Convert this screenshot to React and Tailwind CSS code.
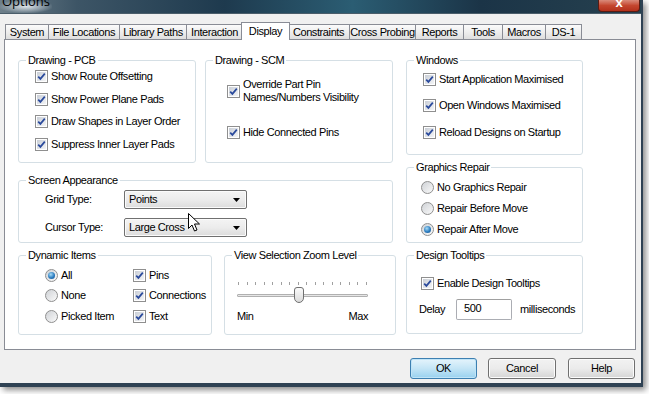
import React from 'react';

const tabs = [
    ['System', 'w-[44px]'],
    ['File Locations', 'w-[71px]'],
    ['Library Paths', 'w-[67px]'],
    ['Interaction', 'w-[56px]'],
    ['Display', 'w-[49px]'],
    ['Constraints', 'w-[62px]'],
    ['Cross Probing', 'w-[66px]'],
    ['Reports', 'w-[48px]'],
    ['Tools', 'w-[39px]'],
    ['Macros', 'w-[43px]'],
    ['DS-1', 'w-[36px]'],
];

const Check = () => (
    <span className="w-[13px] h-[13px] shrink-0 border border-[#8f8f8f] bg-white p-[1px] flex">
        <span className="flex-1 flex items-center justify-center bg-gradient-to-br from-[#c9ced6] to-[#f4f5f7]">
            <svg width="9" height="9" viewBox="0 0 9 9">
                <path d="M1.2 4.6 L3.4 6.9 L7.8 1.6" stroke="#2a4a9c" strokeWidth="1.7" fill="none" />
            </svg>
        </span>
    </span>
);

const Radio = ({ on }) => (
    <span className="w-[13px] h-[13px] shrink-0 rounded-full border border-[#8f8f8f] bg-gradient-to-br from-[#cfd2d6] to-[#fafafa] flex items-center justify-center">
        {on && <span className="w-[7px] h-[7px] rounded-full bg-[radial-gradient(circle_at_40%_35%,#a8dcf7,#2c7dc0_55%,#134f8c)]" />}
    </span>
);

const CheckRow = ({ children }) => (
    <div className="flex items-center gap-[3px] h-[13px] whitespace-nowrap"><Check />{children}</div>
);

const RadioRow = ({ on, children }) => (
    <div className="flex items-center gap-[3px] h-[13px] whitespace-nowrap"><Radio on={on} />{children}</div>
);

const Group = ({ title, className, children }) => (
    <div className={`relative shrink-0 border border-[#d5dfe5] rounded-[3px] ${className}`}>
        <span className="absolute -top-[7px] left-[7px] bg-white px-[2px] leading-[13px] whitespace-nowrap">{title}</span>
        {children}
    </div>
);

const Combo = ({ value }) => (
    <div className="w-[123px] h-[19px] border border-[#707070] rounded-[2px] bg-gradient-to-b from-[#f4f4f4] via-[#ececec] to-[#dcdcdc] flex items-center pl-[4px] pr-[6px] shadow-[inset_0_0_0_1px_#fbfbfb]">
        <span className="flex-1">{value}</span>
        <svg width="7" height="4" viewBox="0 0 7 4"><path d="M0 0 H7 L3.5 4 Z" fill="#000" /></svg>
    </div>
);

const Button = ({ label, def, className }) => (
    <div className={`h-[21px] rounded-[3px] border flex items-center justify-center ${def ? 'border-[#3c7fb1] bg-gradient-to-b from-[#e5f4fc] via-[#c4e5f6] to-[#98d1ef] shadow-[inset_0_0_0_1px_#c0e4f7]' : 'border-[#707070] bg-gradient-to-b from-[#f2f2f2] via-[#ebebeb] to-[#d5d5d5] shadow-[inset_0_0_0_1px_#fcfcfc]'} ${className}`}>
        {label}
    </div>
);

export default function App() {
    return (
        <div className="w-[649px] h-[394px] bg-white overflow-hidden text-[11px] leading-[13px] tracking-[-0.4px] text-black font-['Liberation_Sans',Arial,sans-serif]">
            <div className="w-[643px] h-[387px] flex flex-col border-r-[2px] border-b-[4px] border-[#2f4254] shadow-[3px_3px_6px_rgba(0,0,0,0.45)]">
                {/* title bar */}
                <div className="h-[14px] shrink-0 flex bg-[linear-gradient(90deg,#6d7f8a_0%,#3d5566_12%,#1e3a4e_35%,#2b5d73_55%,#1b3447_75%,#26414f_100%)] border-b border-[#4a5d6a]">
                    <div className="h-full px-[2px] bg-[radial-gradient(ellipse_at_center,rgba(235,240,245,0.9),rgba(235,240,245,0)_75%)]">
                        <span className="block -mt-[7px] text-[13px] leading-[16px] tracking-normal font-['Open_Sans',sans-serif]">Options</span>
                    </div>
                    <div className="flex-1" />
                    <div className="w-[42px] h-[12px] mr-[1px] rounded-b-[4px] border border-t-0 border-[#5a1b12] bg-gradient-to-b from-[#d98a7a] via-[#c4462f] to-[#b3301b] flex justify-center">
                        <span className="text-white text-[13px] leading-[10px] font-bold -mt-[2px]">x</span>
                    </div>
                </div>

                {/* dialog body */}
                <div className="flex-1 bg-[#f0f0f0] flex flex-col">
                    {/* tabs */}
                    <div className="h-[17px] mt-[8px] pl-[5px] flex items-end">
                        {tabs.map(([name, w], i) => name === 'Display' ? (
                            <div key={name} className={`${w} h-[18px] -mb-[1px] -mx-[2px] relative z-10 bg-white border border-b-0 border-[#898c95] flex items-start justify-center pt-[2px]`}>{name}</div>
                        ) : (
                            <div key={name} className={`${w} h-[15px] border-t border-r border-[#898c95] ${i === 0 ? 'border-l' : ''} bg-gradient-to-b from-[#fbfbfb] via-[#eeeeee] to-[#dedede] flex items-center justify-center whitespace-nowrap`}>{name}</div>
                        ))}
                    </div>

                    {/* panel */}
                    <div className="ml-[4px] w-[632px] h-[311px] bg-white border border-[#898c95] pl-[13px] pt-[20px] flex gap-[10px]">
                        <div className="w-[378px] flex flex-col">
                            <div className="flex gap-[9px]">
                                <Group title="Drawing - PCB" className="w-[178px] h-[103px] pl-[16px] pt-[9px] flex flex-col gap-[9.7px]">
                                    <CheckRow>Show Route Offsetting</CheckRow>
                                    <CheckRow>Show Power Plane Pads</CheckRow>
                                    <CheckRow>Draw Shapes in Layer Order</CheckRow>
                                    <CheckRow>Suppress Inner Layer Pads</CheckRow>
                                </Group>
                                <Group title="Drawing - SCM" className="w-[188px] h-[103px] pl-[21px] pt-[17px] flex flex-col">
                                    <div className="flex items-center gap-[3px]">
                                        <Check />
                                        <span>Override Part Pin<br />Names/Numbers Visibility</span>
                                    </div>
                                    <div className="mt-[22px]"><CheckRow>Hide Connected Pins</CheckRow></div>
                                </Group>
                            </div>
                            <Group title="Screen Appearance" className="mt-[17px] w-[375px] h-[63px] pt-[9px] pl-[26px] flex flex-col gap-[9px]">
                                <div className="flex items-center"><span className="w-[79px]">Grid Type:</span><Combo value="Points" /></div>
                                <div className="flex items-center"><span className="w-[79px]">Cursor Type:</span><Combo value="Large Cross" /></div>
                                <svg className="absolute left-[169px] top-[32px]" width="12" height="19" viewBox="0 0 12 19">
                                    <path d="M0.5 0.5 V15.5 L4 12 L6.5 18 L9 17 L6.5 11 L11.5 11 Z" fill="#fff" stroke="#000" strokeWidth="1" />
                                </svg>
                            </Group>
                            <div className="mt-[12px] flex gap-[12px]">
                                <Group title="Dynamic Items" className="w-[194px] h-[80px] pl-[26px] pt-[12.5px] flex">
                                    <div className="w-[88px] flex flex-col gap-[7.8px]">
                                        <RadioRow on>All</RadioRow>
                                        <RadioRow>None</RadioRow>
                                        <RadioRow>Picked Item</RadioRow>
                                    </div>
                                    <div className="flex flex-col gap-[7.8px]">
                                        <CheckRow>Pins</CheckRow>
                                        <CheckRow>Connections</CheckRow>
                                        <CheckRow>Text</CheckRow>
                                    </div>
                                </Group>
                                <Group title="View Selection Zoom Level" className="w-[172px] h-[80px] pl-[12px] pt-[26px] flex flex-col">
                                    <div className="w-[131px] h-[4px] flex justify-between px-[1px]">
                                        {Array.from({ length: 16 }).map((_, i) => (
                                            <span key={i} className="w-[1px] h-[3px] bg-[#a0a0a0]" />
                                        ))}
                                    </div>
                                    <div className="relative w-[131px] h-[16px] mt-[1px] flex items-center">
                                        <div className="w-full h-[3px] border border-[#b0b0b0] bg-[#e6e6e6] rounded-[1px]" />
                                        <div className="absolute left-[57px] top-0 w-[10px] h-[16px] rounded-[3px] rounded-b-[5px] border border-[#707070] bg-gradient-to-b from-[#fbfbfb] to-[#dadada]" />
                                    </div>
                                    <div className="w-[131px] flex justify-between mt-[7px]">
                                        <span>Min</span><span>Max</span>
                                    </div>
                                </Group>
                            </div>
                        </div>

                        <div className="w-[177px] flex flex-col">
                            <Group title="Windows" className="w-[177px] h-[95px] pl-[16px] pt-[11.5px] flex flex-col gap-[13.5px]">
                                <CheckRow>Start Application Maximised</CheckRow>
                                <CheckRow>Open Windows Maximised</CheckRow>
                                <CheckRow>Reload Designs on Startup</CheckRow>
                            </Group>
                            <Group title="Graphics Repair" className="mt-[12px] w-[177px] h-[76px] pl-[14px] pt-[12.5px] flex flex-col gap-[8px]">
                                <RadioRow>No Graphics Repair</RadioRow>
                                <RadioRow>Repair Before Move</RadioRow>
                                <RadioRow on>Repair After Move</RadioRow>
                            </Group>
                            <Group title="Design Tooltips" className="mt-[12px] w-[177px] h-[79px] pl-[14px] pt-[20.5px] flex flex-col">
                                <CheckRow>Enable Design Tooltips</CheckRow>
                                <div className="mt-[9px] flex items-center -ml-[2px]">
                                    <span className="w-[37px]">Delay</span>
                                    <div className="w-[56px] h-[21px] border border-[#abadb3] border-t-[#a0a0a0] rounded-[2px] bg-white pl-[7px] pt-[2px]">500</div>
                                    <span className="ml-[8px]">milliseconds</span>
                                </div>
                            </Group>
                        </div>
                    </div>

                    {/* buttons */}
                    <div className="mt-[8px] flex justify-end pr-[6px]">
                        <Button label="OK" def className="w-[67px]" />
                        <Button label="Cancel" className="w-[68px] ml-[11px]" />
                        <Button label="Help" className="w-[67px] ml-[12px]" />
                    </div>
                </div>
            </div>
        </div>
    );
}
